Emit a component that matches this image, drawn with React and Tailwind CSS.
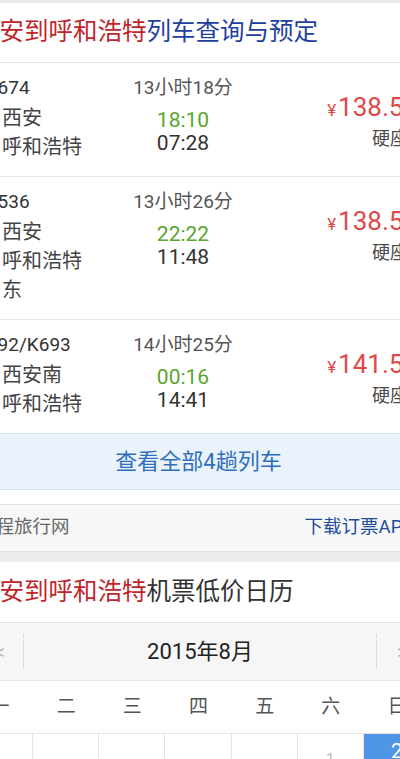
const trains = [
  { no: 'K1674', dur: '13小时18分', from: '西安', to: '呼和浩特', dep: '18:10', arr: '07:28', price: '138.50' },
  { no: 'K1536', dur: '13小时26分', from: '西安', to: '呼和浩特东', dep: '22:22', arr: '11:48', price: '138.50' },
  { no: 'K692/K693', dur: '14小时25分', from: '西安南', to: '呼和浩特', dep: '00:16', arr: '14:41', price: '141.50' },
]

const weekdays = ['一', '二', '三', '四', '五', '六', '日']

function TrainRow({ t, last }) {
  return (
    <div className={`flex ${last ? '' : 'border-b border-dotted border-[#d6d6d6]'}`}>
      <div className="w-[123px] pl-[8px] pt-[12px] pb-[14px]">
        <div className="text-[19px] leading-[26px] text-[#333]">{t.no}</div>
        <div className="mt-[3px] flex">
          <span className="w-[20px] mr-[7px] shrink-0" />
          <div className="w-[88px] text-[20px] leading-[29px] text-[#444]">
            <div>{t.from}</div>
            <div>{t.to}</div>
          </div>
        </div>
      </div>
      <div className="w-[186px] pt-[12px] text-center">
        <div className="text-[19px] leading-[26px] text-[#555]">{t.dur}</div>
        <div className="mt-[8px] text-[21px] leading-[23px] text-[#5aa52e]">{t.dep}</div>
        <div className="text-[21px] leading-[23px] text-[#333]">{t.arr}</div>
      </div>
      <div className="flex-1 pt-[29px] text-right">
        <div className="pr-[12px] leading-[30px] text-[#e04848] whitespace-nowrap">
          <span className="text-[17px] mr-[2px]">¥</span>
          <span className="text-[26px]">{t.price}</span>
        </div>
        <div className="pr-[22px] text-[18px] leading-[26px] text-[#4a4a4a]">硬座</div>
      </div>
    </div>
  )
}

export default function App() {
  return (
    <div className="w-[400px] h-[759px] overflow-hidden bg-white font-['Roboto','Noto_Sans_CJK_SC',sans-serif]">
      <div className="-ml-[33px] w-[463px]">
        <div className="h-[3px] bg-[#ececec]" />
        <div className="h-[60px] flex items-center pl-[8px] border-b border-[#e3e3e3] text-[24.5px] whitespace-nowrap">
          <span className="text-[#c1242b]">西安到呼和浩特</span>
          <span className="text-[#1f3f9f]">列车查询与预定</span>
        </div>

        {trains.map((t, i) => (
          <TrainRow key={t.no} t={t} last={i === trains.length - 1} />
        ))}

        <div className="h-[57px] flex items-center justify-center bg-[#eaf3fb] border-y border-[#cfe0ee] text-[22px] text-[#2f6fbd]">
          查看全部4趟列车
        </div>
        <div className="h-[14px] bg-white" />
        <div className="h-[48px] flex items-center justify-between pl-[10px] pr-[16px] bg-[#f7f7f7] border-y border-[#dedede] text-[18.5px]">
          <span className="text-[#666]">携程旅行网</span>
          <span className="text-[#1f4b9a]">下载订票APP</span>
        </div>
        <div className="h-[10px] bg-[#ececec]" />

        <div className="h-[60px] flex items-center pl-[8px] text-[24.5px] whitespace-nowrap">
          <span className="text-[#c1242b]">西安到呼和浩特</span>
          <span className="text-[#333]">机票低价日历</span>
        </div>

        <div className="h-[59px] flex items-center bg-[#f6f6f6] border-y border-[#e6e6e6]">
          <div className="w-[57px] h-full flex items-center justify-end">
            <span className="mr-[18px] text-[20px] text-[#bbb]">&lt;</span>
            <div className="h-[35px] border-r border-dotted border-[#c8c8c8]" />
          </div>
          <div className="flex-1 text-center text-[22px] text-[#222]">2015年8月</div>
          <div className="w-[54px] h-full flex items-center">
            <div className="h-[35px] border-l border-dotted border-[#c8c8c8]" />
            <span className="ml-[20px] text-[20px] text-[#bbb]">&gt;</span>
          </div>
        </div>

        <div className="grid grid-cols-7 h-[52px] items-center text-center text-[19px] text-[#555]">
          {weekdays.map((d) => (
            <div key={d}>{d}</div>
          ))}
        </div>

        <div className="grid grid-cols-7 h-[60px] border-t border-[#e3e3e3]">
          {[0, 1, 2, 3, 4].map((i) => (
            <div key={i} className="border-r border-[#e3e3e3]" />
          ))}
          <div className="border-r border-[#e3e3e3] text-center pt-[14px] text-[16px] text-[#bbb]">1</div>
          <div className="bg-[#4f97e6] text-center pt-[2px] text-[21px] text-white">2</div>
        </div>
      </div>
    </div>
  )
}
